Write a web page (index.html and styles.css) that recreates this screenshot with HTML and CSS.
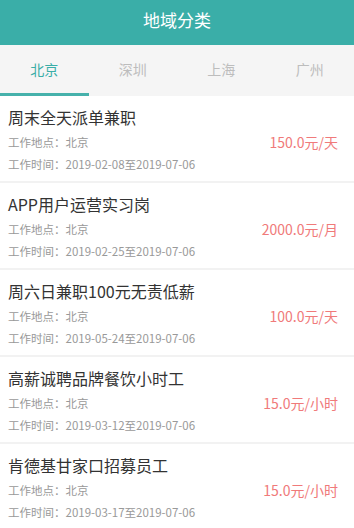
FILE: index.html
```html
<!DOCTYPE html>
<html lang="zh">
<head>
<meta charset="utf-8">
<title>地域分类</title>
<link rel="stylesheet" href="styles.css">
</head>
<body>
<header class="appbar">地域分类</header>
<nav class="tabs">
  <div class="tab active">北京</div>
  <div class="tab">深圳</div>
  <div class="tab">上海</div>
  <div class="tab">广州</div>
</nav>
<ul class="list">
  <li class="item">
    <div class="title">周末全天派单兼职</div>
    <div class="row"><span class="meta">工作地点：北京</span><span class="price">150.0元/天</span></div>
    <div class="meta time">工作时间：2019-02-08至2019-07-06</div>
  </li>
  <li class="item">
    <div class="title">APP用户运营实习岗</div>
    <div class="row"><span class="meta">工作地点：北京</span><span class="price">2000.0元/月</span></div>
    <div class="meta time">工作时间：2019-02-25至2019-07-06</div>
  </li>
  <li class="item">
    <div class="title">周六日兼职100元无责低薪</div>
    <div class="row"><span class="meta">工作地点：北京</span><span class="price">100.0元/天</span></div>
    <div class="meta time">工作时间：2019-05-24至2019-07-06</div>
  </li>
  <li class="item">
    <div class="title">高薪诚聘品牌餐饮小时工</div>
    <div class="row"><span class="meta">工作地点：北京</span><span class="price">15.0元/小时</span></div>
    <div class="meta time">工作时间：2019-03-12至2019-07-06</div>
  </li>
  <li class="item">
    <div class="title">肯德基甘家口招募员工</div>
    <div class="row"><span class="meta">工作地点：北京</span><span class="price">15.0元/小时</span></div>
    <div class="meta time">工作时间：2019-03-17至2019-07-06</div>
  </li>
</ul>
</body>
</html>
```
FILE: styles.css
```css
* { box-sizing: border-box; }
html, body { margin: 0; padding: 0; }
body {
  width: 354px;
  height: 528px;
  overflow: hidden;
  background: #fff;
  font-family: "Noto Sans CJK SC", "Noto Sans", sans-serif;
}
.appbar {
  height: 45px;
  background: #3aaea8;
  color: #fff;
  font-size: 17px;
  line-height: 40px;
  text-align: center;
}
.tabs {
  height: 51px;
  background: #f5f5f5;
  display: flex;
}
.tab {
  flex: 1;
  text-align: center;
  font-size: 14px;
  line-height: 48px;
  color: #bdbdbd;
  border-bottom: 3px solid transparent;
}
.tab.active {
  color: #3aaea8;
  border-bottom-color: #46b1ab;
}
.list {
  list-style: none;
  margin: 0;
  padding: 0;
}
.item {
  padding: 10px 16px 5px 8px;
  border-bottom: 2px solid #f2f2f2;
}
.title {
  font-size: 16px;
  line-height: 22px;
  color: #333;
}
.row {
  margin-top: 3px;
  display: flex;
  justify-content: space-between;
  align-items: center;
  height: 22px;
}
.meta {
  font-size: 11.5px;
  line-height: 22px;
  color: #999;
}
.time {
  line-height: 23px;
}
.price {
  font-size: 14px;
  color: #f07a7a;
}
```
